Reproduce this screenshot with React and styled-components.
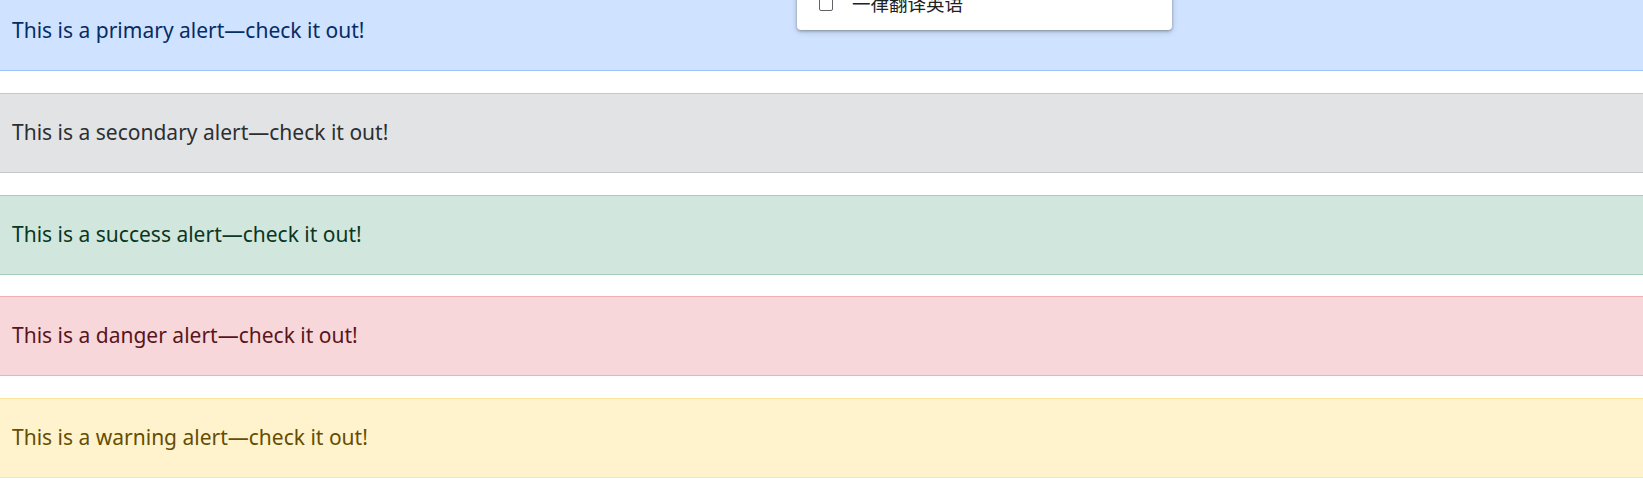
import styled, { createGlobalStyle } from 'styled-components';

const GlobalStyle = createGlobalStyle`
    html, body {
        margin: 0;
        padding: 0;
        background: #fff;
        overflow: hidden;
    }
`

const Page = styled.div`
    position: relative;
    width: 100%;
    height: 491px;
    overflow: hidden;
    font-family: "Noto Sans", "Open Sans", sans-serif;
`

const AlertList = styled.div`
    display: flex;
    flex-direction: column;
    gap: 21.6px;
    margin-top: -8.6px;
`

const variants = {
    primary: { bg: '#cfe2ff', border: '#9ec5fe', color: '#052c65' },
    secondary: { bg: '#e2e3e5', border: '#c4c8cb', color: '#2b2f32' },
    success: { bg: '#d1e7dd', border: '#a3cfbb', color: '#0a3622' },
    danger: { bg: '#f8d7da', border: '#f1aeb5', color: '#58151c' },
    warning: { bg: '#fff3cd', border: '#ffe69c', color: '#664d03' },
}

const Alert = styled.div`
    box-sizing: border-box;
    height: 80px;
    display: flex;
    align-items: center;
    padding: 0 12px 2px;
    font-size: 21px;
    background: ${p => variants[p.$variant].bg};
    color: ${p => variants[p.$variant].color};
    border-top: 1px solid ${p => variants[p.$variant].border};
    border-bottom: 1px solid ${p => variants[p.$variant].border};
`

const Popup = styled.div`
    position: absolute;
    left: 797px;
    top: -20px;
    width: 375px;
    height: 50px;
    box-sizing: border-box;
    background: #fff;
    border-radius: 4px;
    box-shadow: 0 1px 3px rgba(60, 64, 67, 0.45), 0 2px 6px rgba(60, 64, 67, 0.2);
    display: flex;
    align-items: flex-start;
    gap: 19px;
    padding: 17px 0 0 22px;
`

const Checkbox = styled.span`
    width: 12px;
    height: 12px;
    border: 1.5px solid #5f6368;
    border-radius: 2px;
    flex: none;
`

const PopupLabel = styled.span`
    font-family: "Noto Sans CJK SC", sans-serif;
    font-size: 18.5px;
    line-height: 18px;
    color: #202124;
    margin-top: -3px;
`

const alerts = ['primary', 'secondary', 'success', 'danger', 'warning']

export default function App() {
    return (
        <Page>
            <GlobalStyle />
            <AlertList>
                {alerts.map((v) => (
                    <Alert key={v} $variant={v}>
                        This is a {v} alert—check it out!
                    </Alert>
                ))}
            </AlertList>
            <Popup>
                <Checkbox />
                <PopupLabel>一律翻译英语</PopupLabel>
            </Popup>
        </Page>
    )
}
